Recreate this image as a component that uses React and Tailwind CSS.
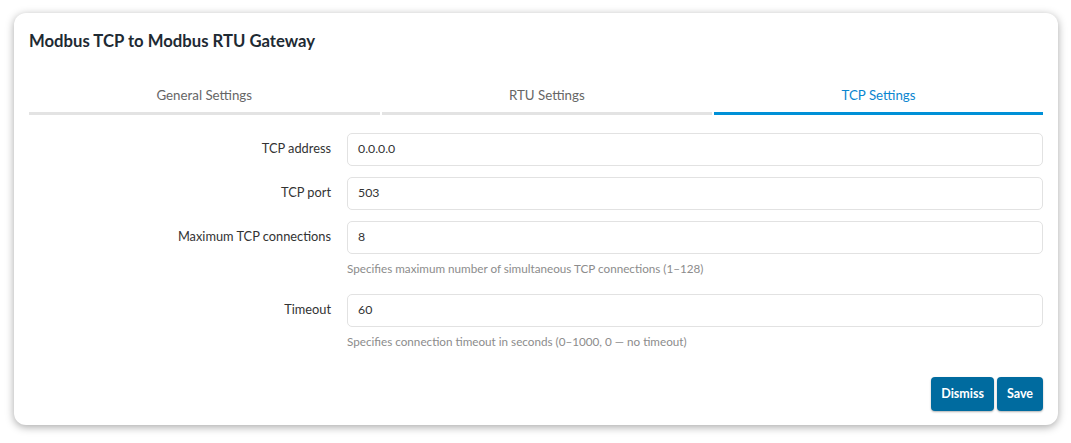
import React from "react";

function Row({ label, value, hint, last }) {
  return (
    <div className={`flex ${last ? "" : "mb-[11px]"}`}>
      <div className="w-[302px] shrink-0 text-right pt-[7px] text-[12.8px] leading-[16px] text-[#333]">
        {label}
      </div>
      <div className="flex-1 ml-[16px]">
        <div className="h-[33px] border border-[#e2e2e2] rounded-[5px] px-[10px] flex items-center text-[12.3px] text-[#333] bg-white">
          {value}
        </div>
        {hint && (
          <div className="mt-[6px] mb-[7px] text-[11.7px] leading-[16px] text-[#8c8c8c]">{hint}</div>
        )}
      </div>
    </div>
  );
}

export default function App() {
  const tabs = [
    { name: "General Settings", active: false },
    { name: "RTU Settings", active: false },
    { name: "TCP Settings", active: true },
  ];
  return (
    <div
      className="w-[1071px] h-[443px] bg-white pt-[13px] pl-[14px]"
      style={{ fontFamily: "Lato, 'Open Sans', sans-serif" }}
    >
      <div className="w-[1044px] h-[412px] bg-white rounded-[12px] shadow-[0_2px_8px_rgba(0,0,0,0.35)] p-[15px]">
        <div className="text-[16.7px] leading-[26px] font-bold text-[#1e2a33]">
          Modbus TCP to Modbus RTU Gateway
        </div>
        <div className="flex gap-[2px] mt-[20px]">
          {tabs.map((t) => (
            <div
              key={t.name}
              className={`flex-auto text-center pt-[12px] pb-[8px] leading-[18px] text-[13.3px] border-b-[3px] ${
                t.active ? "border-[#0090d7] text-[#0a86d0]" : "border-[#e3e3e3] text-[#666]"
              }`}
            >
              {t.name}
            </div>
          ))}
        </div>
        <div className="mt-[18px]">
          <Row label="TCP address" value="0.0.0.0" />
          <Row label="TCP port" value="503" />
          <Row
            label="Maximum TCP connections"
            value="8"
            hint="Specifies maximum number of simultaneous TCP connections (1–128)"
          />
          <Row
            label="Timeout"
            value="60"
            hint="Specifies connection timeout in seconds (0–1000, 0 — no timeout)"
            last
          />
        </div>
        <div className="flex justify-end gap-[3px] mt-[21px]">
          <button className="h-[34px] px-[10px] rounded-[4px] bg-[#006b9f] text-white text-[12.5px] font-bold shadow-[0_1px_2px_rgba(0,0,0,0.3)]">
            Dismiss
          </button>
          <button className="h-[34px] px-[10px] rounded-[4px] bg-[#006b9f] text-white text-[12.5px] font-bold shadow-[0_1px_2px_rgba(0,0,0,0.3)]">
            Save
          </button>
        </div>
      </div>
    </div>
  );
}
